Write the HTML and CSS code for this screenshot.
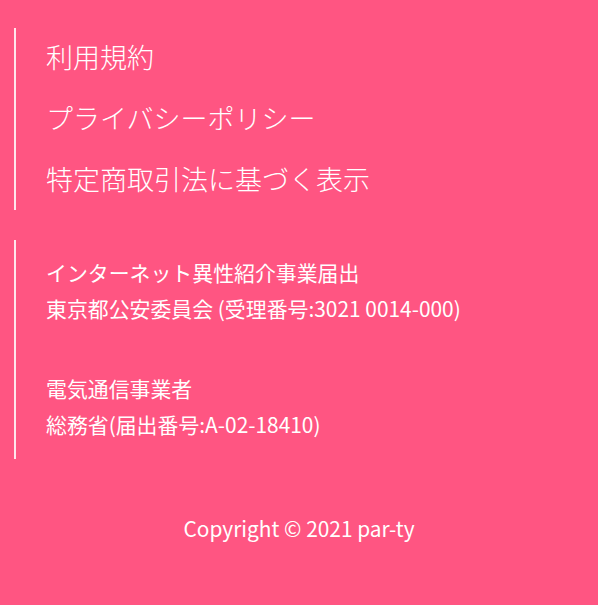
FILE: index.html
```html
<!DOCTYPE html>
<html lang="ja">
<head>
<meta charset="utf-8">
<link rel="stylesheet" href="styles.css">
</head>
<body>
<footer class="footer">
  <ul class="links">
    <li>利用規約</li>
    <li>プライバシーポリシー</li>
    <li>特定商取引法に基づく表示</li>
  </ul>
  <div class="info">
    <p>インターネット異性紹介事業届出<br>東京都公安委員会 (受理番号:3021 0014-000)</p>
    <p>電気通信事業者<br>総務省(届出番号:A-02-18410)</p>
  </div>
  <p class="copy">Copyright © 2021 par-ty</p>
</footer>
</body>
</html>
```
FILE: styles.css
```css
html, body {
  margin: 0;
  padding: 0;
  background: #ff5582;
}
.footer {
  width: 598px;
  height: 605px;
  box-sizing: border-box;
  padding: 28px 0 0 14px;
  color: #fff;
  font-family: "Noto Sans CJK JP", sans-serif;
}
.links {
  list-style: none;
  margin: 0;
  padding: 10px 0 12px 30px;
  border-left: 2px solid rgba(255,255,255,0.85);
  display: flex;
  flex-direction: column;
  gap: 23px;
  font-size: 27px;
  font-weight: 300;
  line-height: 38px;
}
.info {
  margin-top: 30px;
  padding: 14px 0 17px 30px;
  border-left: 2px solid rgba(255,255,255,0.85);
  font-size: 20.9px;
  line-height: 36px;
  display: flex;
  flex-direction: column;
  gap: 44px;
}
.info p { margin: 0; }
.copy {
  margin: 51px 0 0 -14px;
  text-align: center;
  font-size: 20.9px;
  line-height: 36px;
}
```
